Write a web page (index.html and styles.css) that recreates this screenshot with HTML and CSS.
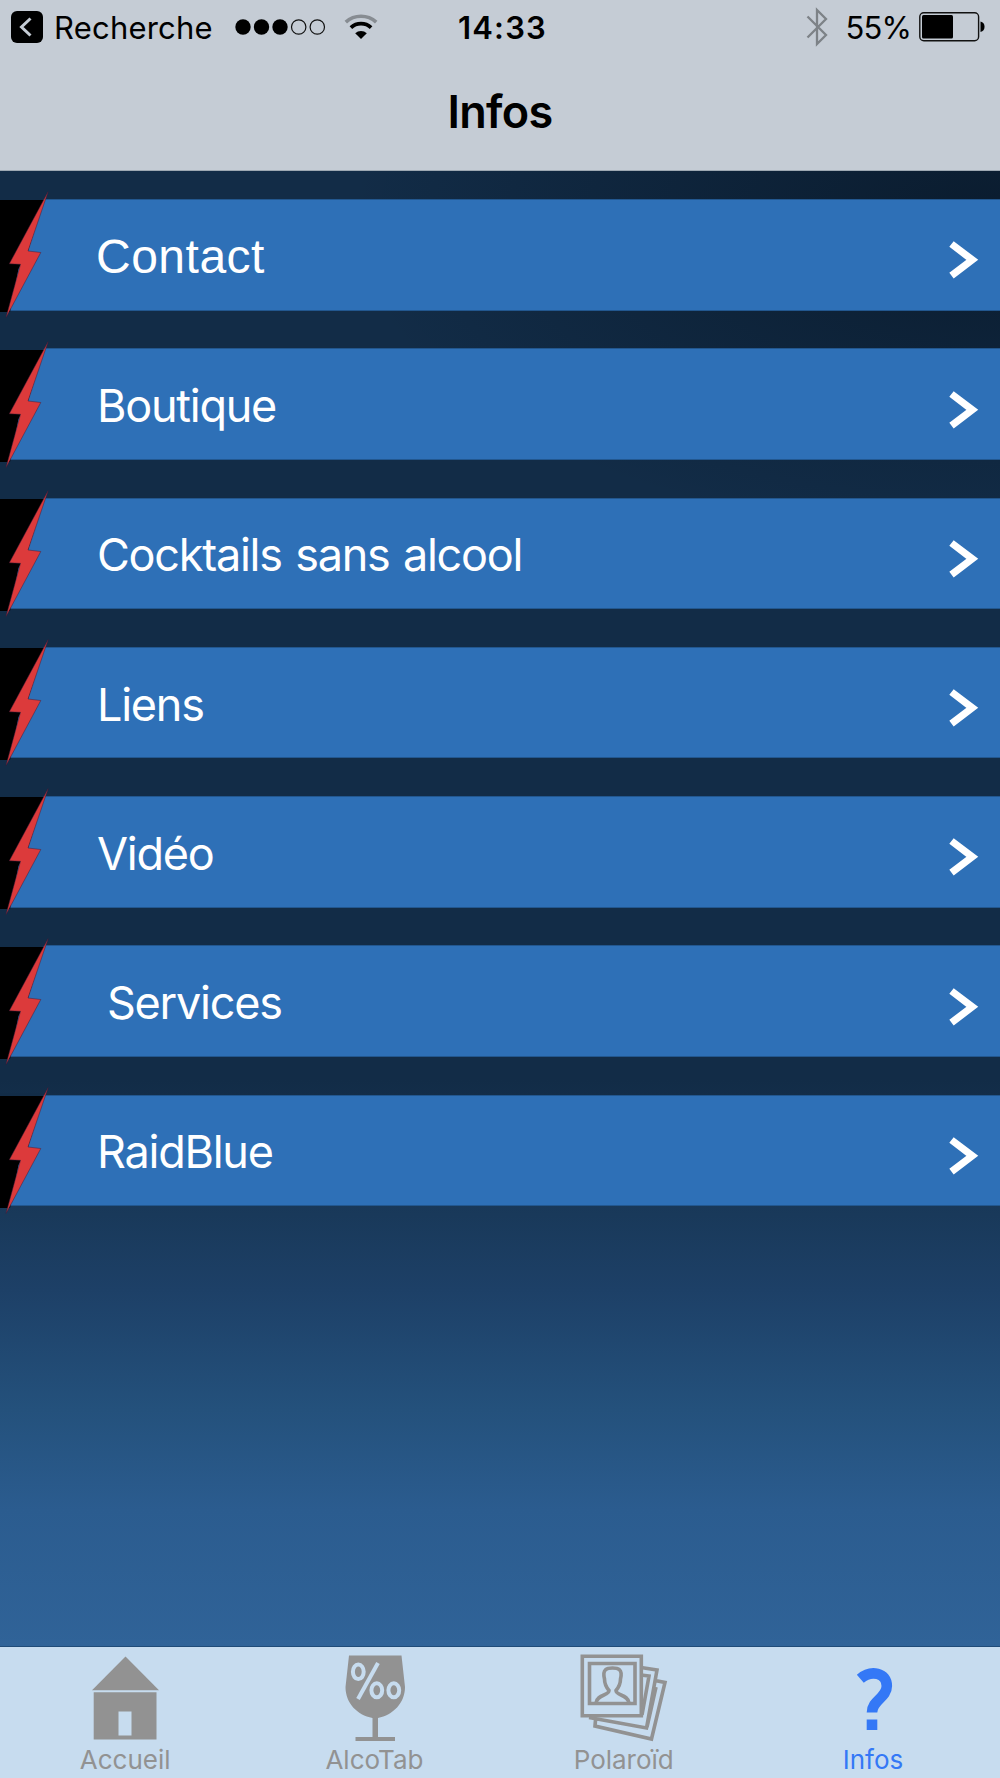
FILE: index.html
```html
<!DOCTYPE html>
<html lang="fr">
<head>
<meta charset="utf-8">
<title>Infos</title>
<link rel="stylesheet" href="styles.css">
</head>
<body>
<svg class="defs" width="0" height="0" aria-hidden="true">
  <symbol id="bolt" viewBox="0 0 52 130">
    <path d="M0 8H45L43 12H0z" fill="#122c47"/>
    <path d="M0 11H44L28 62 18.500 80 10 123H0z" fill="#000"/>
    <path d="M48.200 2.500 28 62 40.800 63.500 6 128.500 20.500 75.300 9.300 74.800z" fill="#dc3a3b" stroke="#401c38" stroke-opacity=".6" stroke-width=".8"/>
  </symbol>
  <symbol id="chevron" viewBox="0 0 32 40">
    <path d="M3.500 4 24.300 19.800 3.500 35.600" fill="none" stroke="#fff" stroke-width="7.200"/>
  </symbol>
</svg>
<div class="screen">
  <header class="top">
    <div class="status">
      <div class="status-left">
        <svg width="32" height="32" viewBox="0 0 32 32"><rect width="32" height="32" rx="6" fill="#000"/><path d="M19.500 7.500 10.500 16l9 8.500" fill="none" stroke="#c5ccd5" stroke-width="3"/></svg>
        <span class="back">Recherche</span>
        <svg class="signal" width="92" height="18" viewBox="0 0 92 18"><g fill="#000"><circle cx="8" cy="9" r="7.700"/><circle cx="26.500" cy="9" r="7.700"/><circle cx="45" cy="9" r="7.700"/></g><g fill="none" stroke="#111" stroke-width="1.200"><circle cx="63.700" cy="9" r="7.200"/><circle cx="82.300" cy="9" r="7.200"/></g></svg>
        <svg class="wifi" width="34" height="26" viewBox="0 0 34 26"><g fill="none"><path d="M1.800 8.200a22.500 22.500 0 0 1 30.400 0" stroke="#878c92" stroke-width="3.600"/><path d="M6.900 13.600a15 15 0 0 1 20.200 0" stroke="#000" stroke-width="3.800"/></g><path d="M17 25l-5.800-5.800a8.500 8.500 0 0 1 11.600 0z" fill="#000"/></svg>
      </div>
      <div class="clock">14:33</div>
      <div class="status-right">
        <svg class="bt" width="22" height="42" viewBox="0 0 22 42"><path d="M1.500 10.500 20 29 11 38V4l9 9L1.500 31.500" fill="none" stroke="#7d8287" stroke-width="2.300"/></svg>
        <span class="percent">55%</span>
        <svg width="66" height="30" viewBox="0 0 66 30"><rect x=".8" y=".8" width="58.800" height="28" rx="4" fill="none" stroke="#111" stroke-width="1.400"/><rect x="3" y="3" width="31" height="23.600" rx="1.500" fill="#000"/><path d="M61.500 9.500q4 1 4 5.300t-4 5.300z" fill="#000"/></svg>
      </div>
    </div>
    <h1 class="title">Infos</h1>
  </header>
  <main class="menu">
    <a class="row"><svg class="bolt"><use href="#bolt"/></svg><span class="label contact">Contact</span><svg class="chevron"><use href="#chevron"/></svg></a>
    <a class="row"><svg class="bolt"><use href="#bolt"/></svg><span class="label">Boutique</span><svg class="chevron"><use href="#chevron"/></svg></a>
    <a class="row"><svg class="bolt"><use href="#bolt"/></svg><span class="label">Cocktails sans alcool</span><svg class="chevron"><use href="#chevron"/></svg></a>
    <a class="row"><svg class="bolt"><use href="#bolt"/></svg><span class="label">Liens</span><svg class="chevron"><use href="#chevron"/></svg></a>
    <a class="row"><svg class="bolt"><use href="#bolt"/></svg><span class="label">Vidéo</span><svg class="chevron"><use href="#chevron"/></svg></a>
    <a class="row"><svg class="bolt"><use href="#bolt"/></svg><span class="label indented">Services</span><svg class="chevron"><use href="#chevron"/></svg></a>
    <a class="row"><svg class="bolt"><use href="#bolt"/></svg><span class="label">RaidBlue</span><svg class="chevron"><use href="#chevron"/></svg></a>
  </main>
  <nav class="tabs">
    <a class="tab">
      <svg width="90" height="90" viewBox="0 0 90 90" fill="#929292"><path d="M45.500 9.500 79 43.300H12z"/><path d="M13.700 45.300H76.500V92.500H13.700zM38.500 64.500V88.500H51.500V64.500z" fill-rule="evenodd"/></svg>
      <span>Accueil</span>
    </a>
    <a class="tab">
      <svg width="90" height="90" viewBox="0 0 90 90" fill="#929292"><path d="M20 8.500H72.500L76 40C76 56 64 68 49 71V90H66V94H26.500V90H43.500V71C28 68 16.500 56 16.500 40z"/><g fill="none" stroke="#c7dcef" stroke-width="4"><ellipse cx="29.300" cy="24.800" rx="5.400" ry="7.300"/><ellipse cx="47.800" cy="43.300" rx="5.400" ry="7"/><ellipse cx="64.800" cy="43.300" rx="5.400" ry="7"/><path d="M49 16 29 52"/></g></svg>
      <span>AlcoTab</span>
    </a>
    <a class="tab">
      <svg class="photos" width="90" height="90" viewBox="0 0 90 90" fill="none" stroke="#929292" stroke-width="3.600"><path d="M7.300 9.300H66.300V68.700H7.300z"/><path d="M14.500 16.500H60V56.500H14.500z"/><path d="M21 56C22 47 34 49 34 43.500C31 40 29.500 36 29.500 32C27 22 32 21 37.500 21S48 22 45.500 32C45.500 36 44 40 41 43.500C41 49 53 47 54 56"/><path d="M66 20.500 82 23 71.500 81 14 70.500M66 28 74 29 67 68M80 33.500 90 35.500 76.500 92 20 79 20.500 73M81 40 72 80"/></svg>
      <span>Polaroïd</span>
    </a>
    <a class="tab active">
      <svg class="question" width="90" height="90" viewBox="0 0 90 90" fill="#3478f6"><path d="M36.300 29.700C47 20.500 62.800 23.500 62.800 37C62.800 49 48 51 48 63.500" fill="none" stroke="#3478f6" stroke-width="10.600"/><path d="M42.700 70.500H53.300V81H42.700z"/></svg>
      <span>Infos</span>
    </a>
  </nav>
</div>
</body>
</html>
```
FILE: styles.css
```css
* { box-sizing: border-box; }
body { margin: 0; font-family: Inter, "Liberation Sans", sans-serif; color: #000; }
.defs { display: block; }
.screen {
  height: 1778px;
  display: grid;
  grid-template-rows: 171px 1fr 132px;
  background:
    radial-gradient(ellipse 650px 320px at 1000px 220px, rgba(5, 17, 30, .6), transparent),
    linear-gradient(#122c47 0, #122c47 1080px, #19395a 1215px, #1d4067 1290px, #24517c 1410px, #2b5c8f 1510px, #306398 1645px);
}
.top { background: #c5ccd5; border-bottom: 1px solid #9da8b2; }
.status { height: 54px; display: grid; grid-template-columns: 1fr auto 1fr; align-items: center; padding: 0 15px 0 11px; }
.status-left, .status-right { display: flex; align-items: center; }
.status-right { justify-content: flex-end; }
.back { margin-left: 11px; font-size: 31px; letter-spacing: .2px; }
.signal { margin-left: 22px; }
.wifi { margin-left: 17px; }
.clock { font-size: 31px; font-weight: 600; letter-spacing: 1.200px; padding: 1px 0 0 9px; }
.bt { margin-right: 18px; }
.percent { font-size: 31px; letter-spacing: -.9px; margin: 1px 8px 0 0; }
.title { margin: 0; padding-top: 30px; font-size: 45px; line-height: 56px; font-weight: 600; text-align: center; letter-spacing: -.7px; }
.menu { display: flex; flex-direction: column; gap: 37.750px; padding-top: 28.200px; }
.row { height: 111.500px; display: flex; align-items: center; background: #2e70b7; border: solid #22578f; border-width: 1px 0; color: #fff; }
.bolt { width: 52px; height: 130px; flex: none; margin-top: -1px; }
.label { flex: 1; margin-left: 45px; padding-top: 4px; font-size: 45px; line-height: 56px; letter-spacing: -1.250px; word-spacing: 2px; white-space: pre; }
.label.contact { margin-left: 44px; padding-top: 5px; font-family: "Liberation Sans", Arial, sans-serif; font-size: 48px; letter-spacing: .500px; }
.label.indented { margin-left: 55px; }
.chevron { width: 32px; height: 40px; margin: 11px 20px 0 0; }
.tabs { display: grid; grid-template-columns: repeat(4, 249.300px); background: #c7dcef; border-top: 1px solid #1f4b78; }
.tab { display: flex; flex-direction: column; align-items: center; color: #929292; font-size: 26px; line-height: 32px; }
.tab svg { overflow: visible; }
.tab span { margin: 7px 0 0 1px; }
.tab .photos { margin-right: 7px; }
.tab .question { margin: 2px 7px -2px 0; }
.tab.active { color: #3478f6; }
```
